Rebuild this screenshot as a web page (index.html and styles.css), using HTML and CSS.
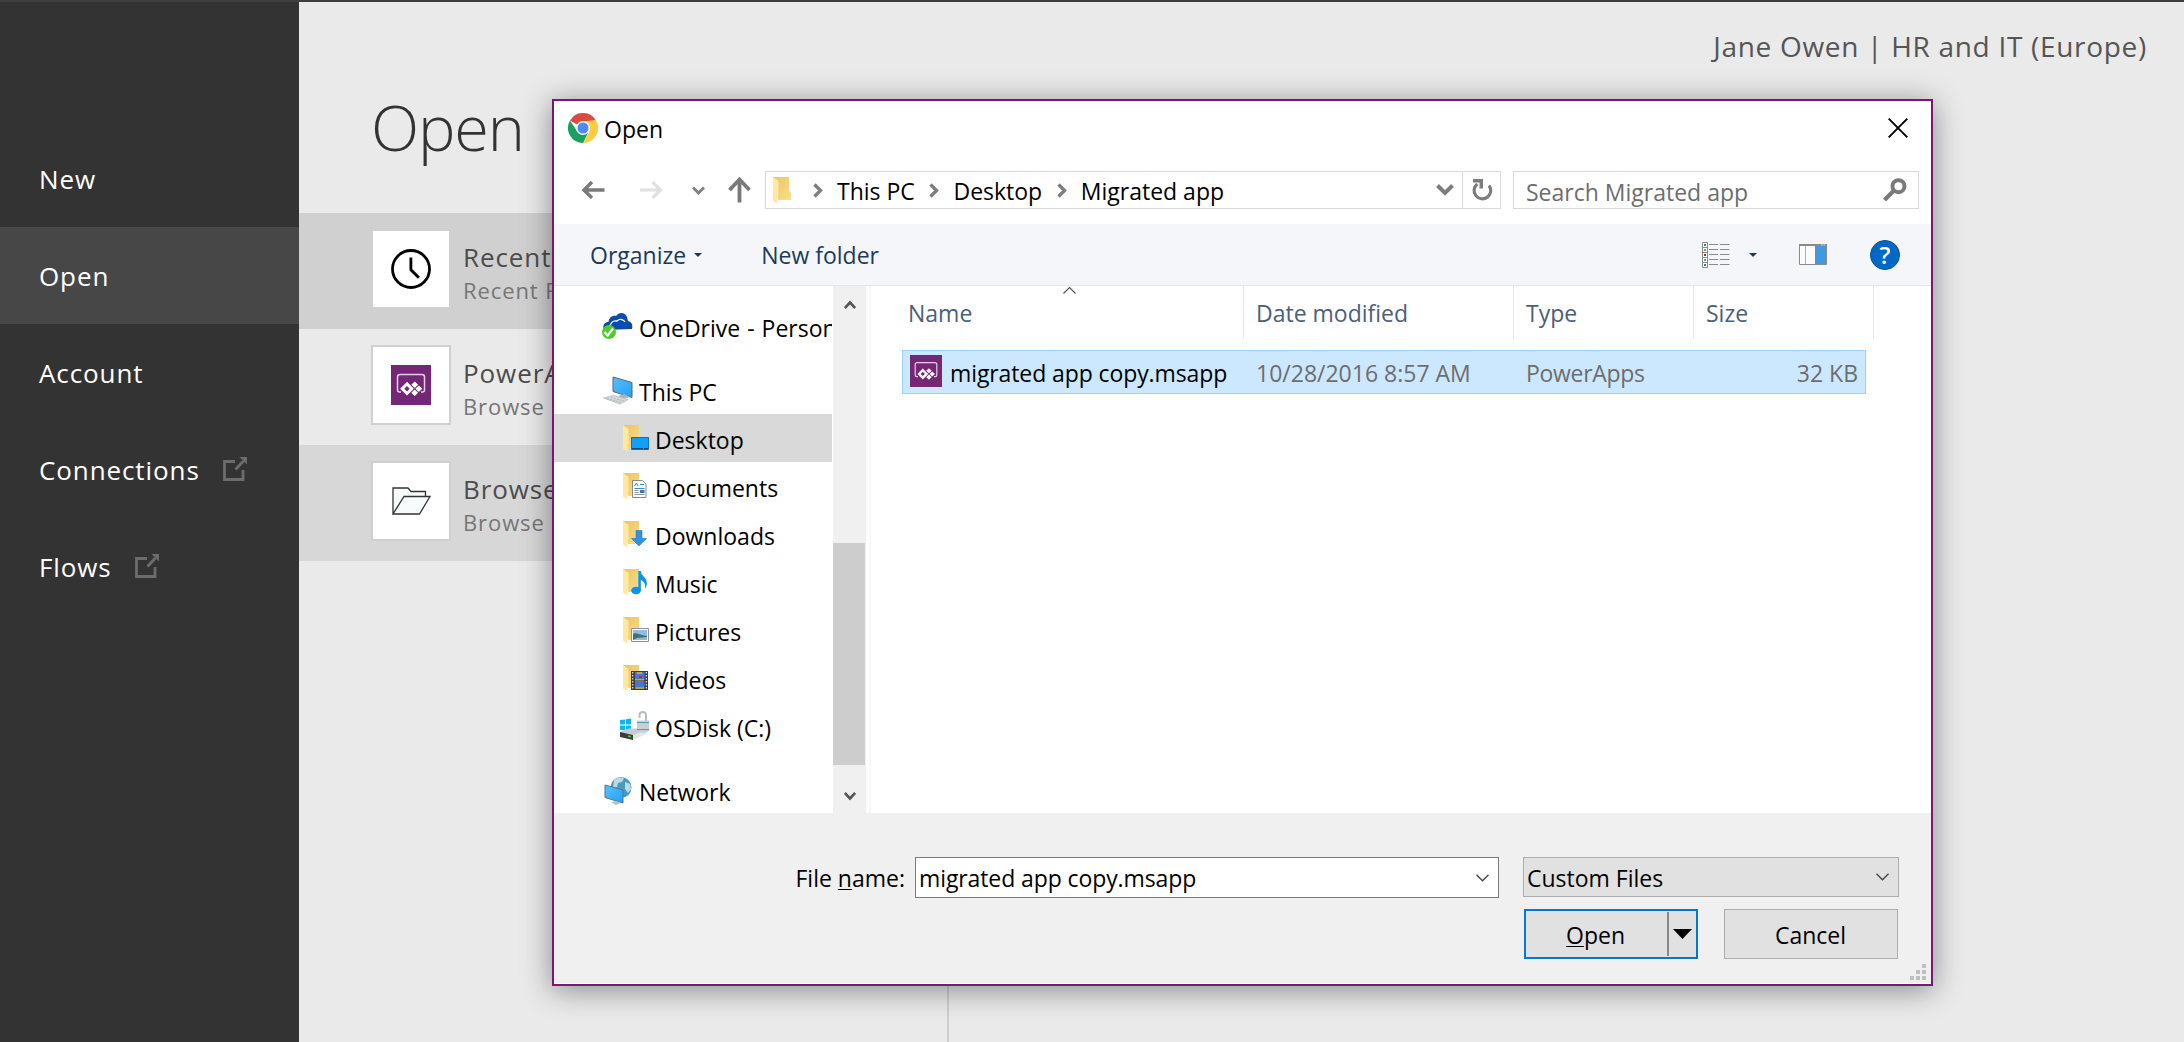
FILE: index.html
```
<!DOCTYPE html>
<html lang="en">
<head>
<meta charset="utf-8">
<title>PowerApps - Open</title>
<link rel="stylesheet" href="styles.css">
</head>
<body>
<svg class="defs" width="0" height="0">
  <defs>
    <linearGradient id="folder-back" x1="0" y1="0" x2="1" y2="1"><stop offset="0" stop-color="#e8c466"/><stop offset="1" stop-color="#fbe08a"/></linearGradient>
    <linearGradient id="screen" x1="0" y1="0" x2="1" y2="1"><stop offset="0" stop-color="#5cc0f8"/><stop offset="1" stop-color="#1fa0fa"/></linearGradient>
    <symbol id="folder" viewBox="0 0 19 27">
      <path d="M0 0h16v14l2 2v7H5z" fill="url(#folder-back)"/>
      <path d="M0 0l5.500 4v14.500l-1 1V27L0 23.500z" fill="#ffe9a2"/>
    </symbol>
    <symbol id="external" viewBox="0 0 24 24">
      <path d="M12 4.500H1.500V22.500H20V13" fill="none" stroke="#6c6c6c" stroke-width="2.800"/>
      <path d="M12.500 12.500L20.500 4" stroke="#6c6c6c" stroke-width="3"/>
      <path d="M16.500 0H24v7.500z" fill="#6c6c6c"/>
    </symbol>
    <symbol id="powerapps" viewBox="0 0 40 40">
      <path d="M0 0h40v40H0z" fill="#742774"/>
      <path d="M10 27H8.500a2 2 0 0 1-2-2V12a2.500 2.500 0 0 1 2.500-2.500h22a2.500 2.500 0 0 1 2.500 2.500v13a2 2 0 0 1-2 2H30" fill="none" stroke="#e3cfe3" stroke-width="1.500"/>
      <path d="M16 16.800l6.800 6.900-6.800 6.900-6.800-6.900z" fill="#fff"/>
      <path d="M16 21l2.700 2.700L16 26.400l-2.700-2.700z" fill="#742774"/>
      <path d="M23.700 16.500l3.400 3.200-3.400 3.200-3.400-3.200zM23.700 24.500l3.400 3.200-3.400 3.200-3.400-3.200zM27.800 20.500l3.400 3.200-3.400 3.200-3.400-3.200z" fill="#fff"/>
    </symbol>
    <symbol id="crumb" viewBox="0 0 10 15"><path d="M1.500 1.500l6 6-6 6" fill="none" stroke="#7f7f7f" stroke-width="3.400"/></symbol>
    <symbol id="caret" viewBox="0 0 8 4"><path d="M0 0h8L4 4z" fill="#1e395b"/></symbol>
    <symbol id="thin-down" viewBox="0 0 13 8"><path d="M.5.800l6 6 6-6" fill="none" stroke="#444" stroke-width="1.300"/></symbol>
  </defs>
</svg>

<div class="app">
  <nav class="sidebar">
    <a class="nav-item">New</a>
    <a class="nav-item active">Open</a>
    <a class="nav-item">Account</a>
    <a class="nav-item">Connections<svg class="external" width="24" height="24"><use href="#external"/></svg></a>
    <a class="nav-item">Flows<svg class="external" width="24" height="24"><use href="#external"/></svg></a>
  </nav>

  <main class="main">
    <div class="user">Jane Owen | HR and IT (Europe)</div>
    <h1 class="heading">Open</h1>
    <div class="sources">
      <div class="source selected">
        <div class="tile"><svg width="40" height="40" viewBox="0 0 40 40"><circle cx="20" cy="20" r="18.500" fill="none" stroke="#000" stroke-width="2.800"/><path d="M19.900 8.500v12.300l8 8" fill="none" stroke="#000" stroke-width="2.800"/></svg></div>
        <div><div class="source-name">Recent</div><div class="source-note">Recent Files</div></div>
      </div>
      <div class="source">
        <div class="tile"><svg width="40" height="40"><use href="#powerapps"/></svg></div>
        <div><div class="source-name">PowerApps</div><div class="source-note">Browse</div></div>
      </div>
      <div class="source hovered">
        <div class="tile"><svg width="39" height="28" viewBox="0 0 39 28"><path d="M1 27V1h15l3 3.500h14.500V9.500M1 27L12 9.500h26L27.500 27z" fill="#f8fbfb" stroke="#333" stroke-width="1.300"/></svg></div>
        <div><div class="source-name">Browse</div><div class="source-note">Browse</div></div>
      </div>
    </div>
  </main>
</div>

<section class="dialog">
  <header class="titlebar">
    <svg width="30" height="30" viewBox="0 0 30 30">
      <path d="M15 15L2 7.500A15 15 0 0 1 28 7.500L15 8.300z" fill="#dc4b3e"/>
      <path d="M28 7.500A15 15 0 0 1 15 30L21.500 18.500 21 8z" fill="#ffcd40"/>
      <path d="M2 7.500A15 15 0 0 0 15 30L20 20 9 18z" fill="#1aa15f"/>
      <path d="M15 8h13.200L21.500 19z" fill="#ffcd40"/>
      <circle cx="15" cy="15" r="7" fill="#f4f4f4"/><circle cx="15" cy="15" r="5.500" fill="#4c8bf5"/>
    </svg>
    <span class="title">Open</span>
    <svg width="20" height="20" viewBox="0 0 20 20"><path d="M.7.700l18.600 18.600M19.300.700L.7 19.300" stroke="#000" stroke-width="1.900"/></svg>
  </header>

  <div class="navbar">
    <div class="nav-icons">
      <svg width="23" height="18" viewBox="0 0 23 18"><path d="M22.500 9H3M10 1L2 9l8 8" fill="none" stroke="#7a7a7a" stroke-width="3.400"/></svg>
      <svg class="forward" width="23" height="18" viewBox="0 0 23 18"><path d="M0 9h20M12.500 1l8 8-8 8" fill="none" stroke="#e0e0e0" stroke-width="3.200"/></svg>
      <svg class="recent" width="13" height="9" viewBox="0 0 13 9"><path d="M1 1.500L6.500 7 12 1.500" fill="none" stroke="#808080" stroke-width="2.900"/></svg>
      <svg class="up" width="23" height="26" viewBox="0 0 23 26"><path d="M11.500 25.500V3M1.500 13l10-10.500 10 10.500" fill="none" stroke="#7a7a7a" stroke-width="3.800"/></svg>
    </div>
    <div class="address">
      <svg class="address-folder" width="19" height="27"><use href="#folder"/></svg>
      <svg width="10" height="15"><use href="#crumb"/></svg>
      <span>This PC</span>
      <svg width="10" height="15"><use href="#crumb"/></svg>
      <span>Desktop</span>
      <svg width="10" height="15"><use href="#crumb"/></svg>
      <span class="crumb-last">Migrated app</span>
      <svg width="18" height="12" viewBox="0 0 18 12"><path d="M1.500 1.500L9 9l7.500-7.500" fill="none" stroke="#7d7d7d" stroke-width="4"/></svg>
      <div class="refresh"><svg width="21" height="22" viewBox="0 0 21 22"><path d="M17 6.500A8.300 8.300 0 1 1 5.300 5" fill="none" stroke="#7d7d7d" stroke-width="3.200"/><path d="M1 0h10v9.500H7.500V3.500H1z" fill="#7d7d7d"/></svg></div>
    </div>
    <div class="search"><span>Search Migrated app</span>
      <svg width="24" height="24" viewBox="0 0 24 24"><circle cx="15.500" cy="8.200" r="6" fill="none" stroke="#7a7a7a" stroke-width="4"/><path d="M11 12.500L1.500 22" stroke="#7a7a7a" stroke-width="4.300"/></svg>
    </div>
  </div>

  <div class="toolbar">
    <span>Organize</span>
    <svg class="organize-caret" width="8" height="4"><use href="#caret"/></svg>
    <span class="new-folder">New folder</span>
    <svg width="28" height="26" viewBox="0 0 28 26">
      <path d="M.5.500h5v25h-5zM.5 5.500h5M.5 10.500h5M.5 15.500h5M.5 20.500h5" fill="#fff" stroke="#8a8a8a"/>
      <path d="M7 2.500h9M18 2.500h9.500M7 7.500h9M18 7.500h9.500M7 12.500h9M18 12.500h9.500M7 17.500h9M18 17.500h9.500M7 22.500h9M18 22.500h9.500" stroke="#8a8a8a"/>
      <path d="M2 2h2v2H2zM2 22h2v2H2z" fill="#2f7f94"/><path d="M2 7h2v2H2zM2 17h2v2H2z" fill="#7d9a5a"/><path d="M2 12h2v2H2z" fill="#c8200c"/>
    </svg>
    <svg class="view-caret" width="8" height="4"><use href="#caret"/></svg>
    <svg class="preview" width="28" height="21" viewBox="0 0 28 21">
      <path d="M.5.500h27v20H.500z" fill="#fcfcfc" stroke="#8a8a8a"/><path d="M0 0h28v2H0z" fill="#8a8a8a"/><path d="M6.500 2v18" stroke="#b0b0b0"/><path d="M16 2h11v18H16z" fill="#3e9ae3"/><path d="M22 1h4" stroke="#ddd" stroke-dasharray="1 .5"/>
    </svg>
    <div class="help">?</div>
  </div>

  <div class="content">
    <div class="tree">
      <div class="node root onedrive">
        <svg width="32" height="27" viewBox="0 0 32 27"><path d="M3 17C1 12 4 9 7.500 9 8 4 12 2 15 3c3-4 9-4 11 1l1 4c4 1 5 4 4 8z" fill="#0a4bb0"/><path d="M8 16c1-6 4-9 8-8 3-3 7-1 8 1" fill="none" stroke="#fff" stroke-width="1.300"/><circle cx="8" cy="19" r="7" fill="#4ecb2c"/><path d="M3.500 19l3.200 3.500L12 15.500" fill="none" stroke="#fff" stroke-width="2.200"/></svg>
        <span>OneDrive - Personal</span>
      </div>
      <div class="node root spaced">
        <svg width="32" height="29" viewBox="0 0 32 29"><path d="M11 1l19 5.500v15L11 15.500z" fill="url(#screen)" stroke="#526b78"/><path d="M16 20l6-2 6 3-7 2z" fill="#a9b4ba"/><path d="M1.500 22l10-2.500 14.500 4L18 28z" fill="#d8dcdf" stroke="#b3b9bd" stroke-width=".8"/><path d="M5 22.500l14 4M9 21.500l13 3.500" stroke="#a6acb0" stroke-width=".8" stroke-dasharray="2 1"/></svg>
        <span>This PC</span>
      </div>
      <div class="node current">
        <svg width="28" height="27"><use href="#folder" width="19" height="27"/><path d="M8.500 12.500h17v12h-17z" fill="#0e9fff" stroke="#0b6fb8"/><path d="M9 23.500h16" stroke="#084d80" stroke-dasharray="11 1"/></svg>
        <span>Desktop</span>
      </div>
      <div class="node">
        <svg width="28" height="27"><use href="#folder" width="19" height="27"/><path d="M9.500 7.500h10l3.500 3.500v13.500H9.500z" fill="#fdfdfd" stroke="#8a8a8a"/><path d="M11.500 13l2-3 1.500 3M17 11.500h4M11.500 15.500h10" stroke="#2a90d8" fill="none"/><path d="M11.500 17.500h4M11.500 19.500h4M11.500 21.500h10" stroke="#999"/><path d="M17 17h4.500v3H17z" fill="#3f78a8"/></svg>
        <span>Documents</span>
      </div>
      <div class="node">
        <svg width="28" height="27"><use href="#folder" width="19" height="27"/><path d="M13 9.500h6v8h4.500L16 25l-7.500-7.500H13z" fill="#2f93e4" stroke="#2079c4" stroke-width=".6"/></svg>
        <span>Downloads</span>
      </div>
      <div class="node">
        <svg width="28" height="27"><use href="#folder" width="19" height="27"/><ellipse cx="13" cy="21.500" rx="4.800" ry="3.800" fill="#0a93f2"/><path d="M15.300 2h2.500c0 5 6.500 6 6 13-.2 2-1 3.500-2 4.500 1-5-1-7-4-8.500V21h-2.500z" fill="#0a93f2"/></svg>
        <span>Music</span>
      </div>
      <div class="node">
        <svg width="28" height="27"><use href="#folder" width="19" height="27"/><path d="M8.500 11.500h17v13h-17z" fill="#fff" stroke="#8c9297"/><path d="M10 13h14v10H10z" fill="#8dbdea"/><path d="M10 17c3-2 6 1 14 2v4H10z" fill="#3f7472"/><path d="M14 21l10-1v3H10z" fill="#9db9c9"/></svg>
        <span>Pictures</span>
      </div>
      <div class="node">
        <svg width="28" height="27"><use href="#folder" width="19" height="27"/><path d="M8 6h17v19H8z" fill="#3c3c3c"/><path d="M12 7h9.500v8H12zM12 16h9.500v8H12z" fill="#4577d8"/><path d="M14 7h5v2h-5zM12 14h9v1.500h-9z" fill="#d9a41a"/><path d="M16 11h3v2h-3z" fill="#c72a1c"/><path d="M13 22h8v2h-8z" fill="#c99a1e"/><path d="M9.700 7v18M23.300 7v18" stroke="#ddd" stroke-width="1.300" stroke-dasharray="1.500 1.500"/></svg>
        <span>Videos</span>
      </div>
      <div class="node disk">
        <svg width="31" height="30" viewBox="0 0 31 30"><path d="M1 9l5-.6v5H1zM7 8.300l5-.7v5.800H7zM1 14.400h5v5l-5-.6zM7 14.400h5v5.800l-5-.7z" fill="#12b5ea"/><path d="M1 21l9-3.500h14l5 3-15 8-13-3.500z" fill="#c9ccce"/><path d="M1 21l13 3v5L1 26z" fill="#3b3d3e"/><path d="M14 24l13-5v4l-13 6z" fill="#e3e5e6"/><path d="M9 25l3 .7" stroke="#47d032" stroke-width="1.500"/><path d="M20.500 7V4c0-4 6.500-4 6.500 0v6" fill="none" stroke="#b9bdc0" stroke-width="2"/><path d="M18 9.500h12V20l-6 2-6-2z" fill="#c5cfd6"/><path d="M18 11.500h12M18 18.500h12" stroke="#5f95b8"/></svg>
        <span>OSDisk (C:)</span>
      </div>
      <div class="node root spaced">
        <svg width="32" height="29" viewBox="0 0 32 29"><circle cx="19" cy="11.500" r="10.500" fill="#4b9abf"/><path d="M12 4c3-3 8-3 10-2l-2 4-4 1-1 4-4 1zM23 6l5 2 1 5-3 4-3-4z" fill="#bcd9e4"/><path d="M3 9l18 5v13L3 21.500z" fill="url(#screen)" stroke="#4c7a94"/><path d="M9 26l5-1 5 2-5 2z" fill="#b5bfc4"/></svg>
        <span>Network</span>
      </div>
    </div>
    <div class="scrollbar">
      <svg width="12" height="9" viewBox="0 0 12 9"><path d="M.8 8L6 2.500 11.200 8" fill="none" stroke="#555" stroke-width="2.700"/></svg>
      <div class="thumb"></div>
      <svg width="12" height="9" viewBox="0 0 12 9"><path d="M.8 1L6 6.500 11.200 1" fill="none" stroke="#555" stroke-width="2.700"/></svg>
    </div>
    <div class="splitter"></div>
    <div class="files">
      <div class="columns">
        <div class="column">Name<svg class="sort" width="13" height="8" viewBox="0 0 13 8"><path d="M.5 7.500l6-6 6 6" fill="none" stroke="#555" stroke-width="1.200"/></svg></div>
        <div class="column">Date modified</div>
        <div class="column">Type</div>
        <div class="column">Size</div>
      </div>
      <div class="file">
        <div class="file-name"><svg width="32" height="32"><use href="#powerapps"/></svg>migrated app copy.msapp</div>
        <div class="file-cell">10/28/2016 8:57 AM</div>
        <div class="file-cell type">PowerApps</div>
        <div class="file-cell size">32 KB</div>
      </div>
    </div>
  </div>

  <footer class="footer">
    <div class="fields">
      <div class="label">File <u>n</u>ame:</div>
      <div class="filename"><span>migrated app copy.msapp</span><svg width="13" height="8"><use href="#thin-down"/></svg></div>
      <div class="filetype"><span>Custom Files</span><svg width="13" height="8"><use href="#thin-down"/></svg></div>
    </div>
    <div class="buttons">
      <div class="button open"><span class="open-label"><u>O</u>pen</span><span class="open-menu"><svg width="19" height="10" viewBox="0 0 19 10"><path d="M0 0h19L9.500 10z"/></svg></span></div>
      <div class="button">Cancel</div>
    </div>
    <svg class="grip" width="16" height="16" viewBox="0 0 16 16"><path d="M12 0h4v4h-4zM6 6h4v4H6zM12 6h4v4h-4zM0 12h4v4H0zM6 12h4v4H6zM12 12h4v4h-4z" fill="#bfbfbf"/></svg>
  </footer>
</section>
</body>
</html>
```

FILE: styles.css
```
* { box-sizing: border-box; }
body {
  margin: 0;
  height: 1042px;
  overflow: hidden;
  position: relative;
  font: 23px/32px "Open Sans", "Noto Sans", sans-serif;
  color: #000;
  background: #eaeaea;
}
svg { flex: none; display: block; }
.defs { position: absolute; }
span { white-space: nowrap; }
u { text-decoration-thickness: 1px; text-underline-offset: 2px; text-decoration-skip-ink: none; }

/* Page behind the dialog */
.app {
  display: flex;
  height: 1042px;
  border-top: 2px solid #3e3e3e;
}
.sidebar {
  width: 299px;
  padding-top: 128px;
  background: #333;
}
.nav-item {
  display: flex;
  align-items: center;
  height: 97px;
  padding: 1px 0 0 39px;
  color: #fff;
  font-size: 26px;
  letter-spacing: .9px;
}
.nav-item.active { background: #474747; }
.external { margin: 0 0 3px 23px; }
.main {
  flex: 1;
  display: flex;
  flex-direction: column;
  padding-top: 25px;
}
.user {
  padding-right: 37px;
  text-align: right;
  font-size: 28px;
  line-height: 38px;
  letter-spacing: .7px;
  color: #555;
}
.heading {
  margin: 20px 0 44px 72px;
  font-size: 63px;
  line-height: 84px;
  font-weight: 300;
  letter-spacing: -1.2px;
  color: #333;
}
.sources {
  flex: 1;
  width: 650px;
  border-right: 2px solid #cfcfcf;
}
.source {
  display: flex;
  gap: 12px;
  height: 116px;
  padding: 16px 0 0 72px;
  white-space: nowrap;
  letter-spacing: .9px;
}
.source.selected { background: #d0d0d0; }
.source.hovered { background: #d7d7d7; }
.tile {
  display: flex;
  align-items: center;
  justify-content: center;
  width: 80px;
  height: 80px;
  border: 2px solid #d0d0d0;
  background: #fff;
}
.source-name {
  margin-top: 11px;
  font-size: 26px;
  line-height: 34px;
  color: #4c4c4c;
}
.source-note { font-size: 22px; color: #767676; }

/* Dialog window */
.dialog {
  position: absolute;
  left: 552px;
  top: 99px;
  width: 1381px;
  height: 887px;
  border: 2px solid #7a1674;
  background: #fff;
  box-shadow: 0 4px 28px rgba(0, 0, 0, .42);
}
.titlebar {
  display: flex;
  align-items: center;
  height: 54px;
  padding: 0 23px 0 14px;
}
.title { flex: 1; padding: 2px 0 0 6px; }
.navbar {
  display: flex;
  height: 69px;
  padding: 16px 0 0 28px;
}
.nav-icons { display: flex; align-items: center; height: 38px; width: 183px; }
.forward { margin-left: 35px; }
.recent { margin-left: 29px; }
.up { margin-left: 23px; }
.address {
  display: flex;
  align-items: center;
  gap: 14px;
  width: 736px;
  height: 38px;
  padding-left: 7px;
  border: 1px solid #d9d9d9;
}
.address span { padding-top: 1px; margin-right: .6px; }
.address-folder { margin-right: 7px; }
.crumb-last { flex: 1; }
.refresh {
  display: flex;
  align-items: center;
  justify-content: center;
  width: 38px;
  height: 36px;
  margin-left: -6px;
  padding-left: 1px;
  border-left: 1px solid #d9d9d9;
}
.search {
  display: flex;
  align-items: center;
  justify-content: space-between;
  width: 406px;
  height: 38px;
  margin-left: 12px;
  padding: 0 11px 0 12px;
  border: 1px solid #d9d9d9;
  color: #6d6d6d;
}
.search span { padding-top: 3px; }
.toolbar {
  display: flex;
  align-items: center;
  height: 62px;
  padding: 0 31px 0 36px;
  border-bottom: 1px solid #e5e7ea;
  background: #f4f6f9;
  color: #1e395b;
}
.organize-caret { margin-left: 8px; }
.new-folder { flex: 1; margin-left: 59px; }
.view-caret { margin-left: 19px; }
.preview { margin-left: 42px; }
.help {
  width: 30px;
  height: 30px;
  margin-left: 43px;
  border: 1px solid #0b4f8e;
  border-radius: 50%;
  background: #0068c8;
  color: #fff;
  text-align: center;
  font-size: 24px;
  line-height: 28px;
  font-weight: 600;
}

.content { display: flex; height: 527px; }
.tree {
  width: 278px;
  margin-right: 1px;
  padding-top: 16px;
  overflow: hidden;
}
.node {
  display: flex;
  align-items: center;
  height: 48px;
  padding-left: 69px;
}
.node svg { margin-right: 4px; }
.node span { padding-top: 3px; }
.node.root { padding-left: 48px; }
.node.root svg { margin-right: 5px; }
.node.onedrive { padding-left: 47px; word-spacing: 1px; }
.node.onedrive svg { margin-right: 6px; }
.node.disk { padding-left: 65px; }
.node.disk svg { margin-right: 5px; }
.node.spaced { margin-top: 16px; }
.node.current { background: #d9d9d9; }
.scrollbar {
  display: flex;
  flex-direction: column;
  align-items: center;
  width: 33px;
  padding: 14px 0 12px;
  background: #f0f0f0;
}
.thumb {
  width: 32px;
  height: 222px;
  margin: 234px 1px 27px 0;
  background: #cdcdcd;
}
.splitter { width: 2px; margin-left: 3px; background: #f7f7f7; }
.files { flex: 1; }
.columns { display: grid; grid-template-columns: 373px 270px 180px 180px; }
.column {
  position: relative;
  height: 52px;
  padding: 11px 0 0 12px;
  border-right: 1px solid #e5e5e5;
  color: #4c607a;
}
.column:first-child { padding-left: 37px; }
.sort { position: absolute; left: 192px; top: 0; }
.file {
  display: grid;
  grid-template-columns: 341px 270px 180px 171px;
  width: 964px;
  height: 44px;
  margin: 12px 0 0 31px;
  padding-top: 1px;
  border: 1px solid #99d1ff;
  background: #cce8ff;
  line-height: 42px;
  color: #6d6d6d;
}
.file-name { display: flex; padding-left: 7px; color: #000; letter-spacing: -.1px; }
.file-name svg { margin: 3px 8px 0 0; }
.file-cell { padding-left: 12px; }
.file-cell.type { letter-spacing: -.3px; }
.file-cell.size { padding-right: 7px; text-align: right; }

.footer { position: relative; height: 170px; padding-top: 44px; background: #f0f0f0; }
.fields { display: flex; align-items: flex-start; line-height: 41px; }
.label { width: 361px; padding: 1px 10px 0 0; text-align: right; }
.filename, .filetype {
  display: flex;
  align-items: center;
  justify-content: space-between;
  width: 584px;
  height: 41px;
  padding: 0 9px 0 3px;
  border: 1px solid #7a7a7a;
  background: #fff;
}
.filename span { padding-top: 2px; letter-spacing: -.1px; }
.filetype {
  width: 376px;
  height: 40px;
  margin-left: 24px;
  padding-left: 3px;
  border-color: #adadad;
  background: #e1e1e1;
}
.filetype span { padding-top: 3px; }
.buttons { display: flex; gap: 26px; justify-content: flex-end; margin-top: 10px; padding-right: 33px; }
.button {
  width: 174px;
  height: 50px;
  padding: 1px 1px 0 0;
  border: 1px solid #adadad;
  background: #e1e1e1;
  text-align: center;
  line-height: 48px;
}
.button.open { display: flex; border: 2px solid #0078d7; padding: 1px 1px 1px 0; }
.open-label { flex: 1; line-height: 46px; padding-right: 2px; }
.open-menu {
  display: flex;
  align-items: center;
  justify-content: center;
  width: 28px;
  border-left: 2px solid #8a8a8a;
}
.grip { position: absolute; right: 5px; bottom: 3px; }
```
